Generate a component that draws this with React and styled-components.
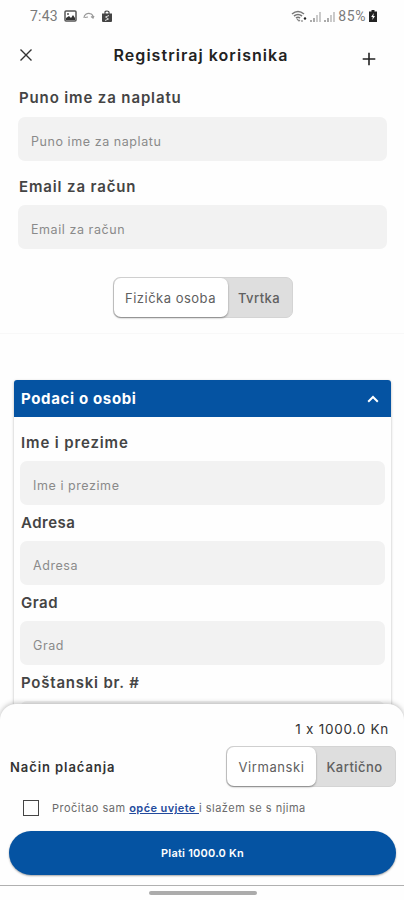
import React, { useState } from "react";
import styled, { createGlobalStyle } from "styled-components";

const GlobalStyle = createGlobalStyle`
  * {
    box-sizing: border-box;
  }
  body {
    margin: 0;
    background-color: #fefefe;
    font-family: Inter, "Noto Sans", sans-serif;
  }
`;

const Screen = styled.div`
  position: relative;
  width: 404px;
  height: 900px;
  overflow: hidden;
  background-color: #fefefe;
`;

const StatusBar = styled.div`
  height: 32px;
  padding: 0 27px 0 30px;
  display: flex;
  align-items: center;
  justify-content: space-between;
  font-family: Roboto, sans-serif;
  font-size: 14px;
  color: #7a7a7a;
`;

const StatusGroup = styled.div`
  display: flex;
  align-items: center;
  gap: ${(props) => props.$gap}px;
`;

const StatusText = styled.span`
  letter-spacing: ${(props) => props.$spacing || 0}px;
`;

const Header = styled.header`
  height: 46px;
  padding: 0 28px 0 19px;
  display: flex;
  align-items: center;
  justify-content: space-between;
`;

const Title = styled.h1`
  margin: 0 0 0 7px;
  font-size: 16px;
  font-weight: 600;
  letter-spacing: 1.05px;
  color: #222;
`;

const IconButton = styled.button`
  display: flex;
  padding: 0;
  border: none;
  background: transparent;
  margin-top: ${(props) => props.$top || 0}px;
`;

const BillingForm = styled.section`
  height: 256px;
  padding: 0 17px 0 18px;
  border-bottom: 1px solid #f8f8f8;
`;

const Label = styled.label`
  display: flex;
  align-items: center;
  height: ${(props) => props.$height || 36}px;
  padding-top: ${(props) => props.$top || 0}px;
  padding-left: 1px;
  font-size: 15px;
  font-weight: 600;
  letter-spacing: ${(props) => props.$spacing || 0.87}px;
  color: #444;
`;

const Input = styled.input`
  display: block;
  width: 100%;
  height: 44px;
  padding: 4px 13px 0;
  border: none;
  border-radius: 7px;
  outline: none;
  background-color: #f2f2f2;
  font-family: inherit;
  font-size: 12.5px;
  letter-spacing: 0.57px;
  &::placeholder {
    color: #8a8a8a;
    opacity: 1;
  }
`;

const ToggleRow = styled.div`
  display: flex;
  justify-content: center;
  padding-top: 28px;
`;

const ToggleGroup = styled.div`
  display: flex;
  width: ${(props) => props.$width}px;
  height: 41px;
  border: 1px solid #d4d4d4;
  border-radius: 7px;
  background-color: #dedede;
`;

const ToggleOption = styled.button`
  width: ${(props) => props.$width}px;
  padding: 0;
  border: none;
  border-radius: 7px;
  background-color: ${(props) => (props.$active ? "#fff" : "transparent")};
  box-shadow: ${(props) => (props.$active ? "0 1px 2px rgba(0, 0, 0, 0.4)" : "none")};
  font-family: inherit;
  font-size: 13px;
  font-weight: ${(props) => (props.$active ? 400 : 500)};
  letter-spacing: ${(props) => props.$spacing}px;
  color: #606060;
`;

const Accordion = styled.section`
  margin: 46px 13px 0 14px;
  height: 400px;
  border-radius: 3px;
  box-shadow: 0 1px 3px rgba(0, 0, 0, 0.28);
`;

const AccordionHeader = styled.div`
  display: flex;
  align-items: center;
  justify-content: space-between;
  height: 37px;
  padding: 0 12px 0 7px;
  border-radius: 3px 3px 0 0;
  background-color: #0553a2;
  color: #fff;
  font-size: 15px;
  font-weight: 700;
  letter-spacing: 0.65px;
`;

const AccordionBody = styled.div`
  padding: 7px 6px 0;
`;

const AccordionInput = styled(Input)`
  margin-top: 1px;
  margin-bottom: -1px;
`;

const CheckoutSheet = styled.section`
  position: absolute;
  left: 0;
  right: 0;
  bottom: 0;
  height: 196px;
  padding: 14px 8px 0 9px;
  border-radius: 16px 16px 0 0;
  background-color: #fefefe;
  box-shadow: 0 -1px 5px rgba(0, 0, 0, 0.25);
`;

const Amount = styled.div`
  height: 28px;
  padding-right: 7px;
  line-height: 23px;
  text-align: right;
  font-size: 13.5px;
  letter-spacing: 0.75px;
  color: #333;
`;

const PaymentRow = styled.div`
  display: flex;
  align-items: center;
  justify-content: space-between;
`;

const PaymentTitle = styled.span`
  padding-left: 1px;
  font-size: 13px;
  font-weight: 600;
  letter-spacing: 0.92px;
  color: #333;
`;

const TermsRow = styled.div`
  display: flex;
  align-items: center;
  height: 44px;
  padding: 0 0 2px 14px;
`;

const Checkbox = styled.span`
  width: 16px;
  height: 16px;
  margin-right: 13px;
  border: 1.5px solid #444;
`;

const TermsText = styled.span`
  font-size: 11px;
  letter-spacing: 0.5px;
  color: #6b6b6b;
  white-space: pre;
`;

const TermsLink = styled.span`
  font-weight: 600;
  letter-spacing: 0.4px;
  color: #234a9c;
  text-decoration: underline;
`;

const PayButton = styled.button`
  width: 100%;
  height: 44px;
  border: none;
  border-radius: 22px;
  background-color: #0553a2;
  box-shadow: 0 1px 2px rgba(0, 0, 0, 0.35);
  color: #fff;
  font-family: inherit;
  font-size: 11px;
  font-weight: 600;
  letter-spacing: 0.22px;
`;

const NavBar = styled.div`
  display: flex;
  justify-content: center;
  margin: 10px -8px 0 -9px;
  padding-top: 5px;
  border-top: 1px solid #b0b0b0;
`;

const NavHandle = styled.div`
  width: 108px;
  height: 4px;
  margin-left: 1px;
  border-radius: 2px;
  background-color: #ababab;
`;

const PictureIcon = () => (
  <svg width="13" height="12" viewBox="0 0 13 12">
    <rect x="1" y="1" width="11" height="10" rx="1" fill="none" stroke="#555" strokeWidth="1.5" />
    <path d="M2 10V8l3-2 2 2 2-3 2 3v2z" fill="#333" />
    <circle cx="4" cy="4" r="1" fill="#555" />
  </svg>
);

const SyncIcon = () => (
  <svg width="12" height="8" viewBox="0 0 12 8">
    <path d="M1 6C1 2.5 4 1 7 1.6C9.5 2 10 4 10 5.5M2 5.5L5 5M8 4.5l2 1.5 1-2" fill="none" stroke="#999" strokeWidth="1.2" />
  </svg>
);

const BagIcon = () => (
  <svg width="12" height="13" viewBox="0 0 12 13">
    <path d="M4 4V2q0-1 2-1t2 1v2" fill="none" stroke="#444" strokeWidth="1.2" />
    <path d="M1 3.5h10V11q0 1-1 1H2q-1 0-1-1z" fill="#444" />
    <path d="M8 5.5L4.5 7l3 2L4 10.5" fill="none" stroke="#ddd" strokeWidth="1" />
  </svg>
);

const WifiIcon = () => (
  <svg width="16" height="13" viewBox="0 0 16 13">
    <path d="M1 4Q7-1 13 4M3 6q4-3 8 0M5 8q2-1.5 4 0" fill="none" stroke="#777" strokeWidth="1.6" />
    <path d="M6 9l2 2 1-1M11 10v2" fill="none" stroke="#888" strokeWidth="1.2" />
    <circle cx="14" cy="8.5" r="1.2" fill="#222" />
  </svg>
);

const SignalIcon = () => (
  <svg width="11" height="11" viewBox="0 0 11 11">
    <path d="M1 9v2M4 7v4" stroke="#888" strokeWidth="1.4" />
    <path d="M7 4v7M10 1v10" stroke="#b5b5b5" strokeWidth="1.4" />
  </svg>
);

const BatteryIcon = () => (
  <svg width="8" height="12" viewBox="0 0 8 12">
    <path d="M2.5 0h3v1.5H8V12H0V1.5h2.5z" fill="#222" />
    <path d="M4.8 3L2.2 7h1.6l-.5 3L6 6H4.3z" fill="#fff" />
  </svg>
);

const CloseIcon = () => (
  <svg width="14" height="14" viewBox="0 0 14 14">
    <path d="M1.5 1.5l11 11M12.5 1.5l-11 11" stroke="#333" strokeWidth="1.4" />
  </svg>
);

const PlusIcon = () => (
  <svg width="14" height="14" viewBox="0 0 14 14">
    <path d="M7 .7v12.6M.7 7h12.6" stroke="#222" strokeWidth="1.6" />
  </svg>
);

const ChevronUp = () => (
  <svg width="12" height="8" viewBox="0 0 12 8">
    <path d="M1.2 6.8L6 2l4.8 4.8" fill="none" stroke="#fff" strokeWidth="2" />
  </svg>
);

const personFields = [
  { name: "Ime i prezime", spacing: 0.87 },
  { name: "Adresa", spacing: 0.5 },
  { name: "Grad", spacing: 0.5 },
];

const App = () => {
  const [person, setPerson] = useState("osoba");
  const [payment, setPayment] = useState("virmanski");

  return (
    <Screen>
      <GlobalStyle />
      <StatusBar>
        <StatusGroup $gap={6}>
          <StatusText $spacing={0.2}>7:43</StatusText>
          <PictureIcon />
          <SyncIcon />
          <BagIcon />
        </StatusGroup>
        <StatusGroup $gap={3}>
          <WifiIcon />
          <SignalIcon />
          <SignalIcon />
          <StatusText $spacing={0.6}>85%</StatusText>
          <BatteryIcon />
        </StatusGroup>
      </StatusBar>
      <Header>
        <IconButton aria-label="Zatvori">
          <CloseIcon />
        </IconButton>
        <Title>Registriraj korisnika</Title>
        <IconButton aria-label="Dodaj" $top={8}>
          <PlusIcon />
        </IconButton>
      </Header>
      <BillingForm>
        <Label $height={39}>Puno ime za naplatu</Label>
        <Input placeholder="Puno ime za naplatu" />
        <Label $height={44} $top={6}>
          Email za račun
        </Label>
        <Input placeholder="Email za račun" />
        <ToggleRow>
          <ToggleGroup $width={180}>
            <ToggleOption $width={114} $spacing={0.5} $active={person === "osoba"} onClick={() => setPerson("osoba")}>
              Fizička osoba
            </ToggleOption>
            <ToggleOption $width={63} $spacing={0.4} $active={person === "tvrtka"} onClick={() => setPerson("tvrtka")}>
              Tvrtka
            </ToggleOption>
          </ToggleGroup>
        </ToggleRow>
      </BillingForm>
      <Accordion>
        <AccordionHeader>
          Podaci o osobi
          <ChevronUp />
        </AccordionHeader>
        <AccordionBody>
          {personFields.map((field) => (
            <React.Fragment key={field.name}>
              <Label $spacing={field.spacing}>{field.name}</Label>
              <AccordionInput placeholder={field.name} />
            </React.Fragment>
          ))}
          <Label $spacing={0.78}>Poštanski br. #</Label>
          <AccordionInput />
        </AccordionBody>
      </Accordion>
      <CheckoutSheet>
        <Amount>1 x 1000.0 Kn</Amount>
        <PaymentRow>
          <PaymentTitle>Način plaćanja</PaymentTitle>
          <ToggleGroup $width={170}>
            <ToggleOption $width={89} $spacing={0.6} $active={payment === "virmanski"} onClick={() => setPayment("virmanski")}>
              Virmanski
            </ToggleOption>
            <ToggleOption $width={77} $spacing={0.45} $active={payment === "karticno"} onClick={() => setPayment("karticno")}>
              Kartično
            </ToggleOption>
          </ToggleGroup>
        </PaymentRow>
        <TermsRow>
          <Checkbox />
          <TermsText>
            Pročitao sam <TermsLink>opće uvjete </TermsLink>i slažem se s njima
          </TermsText>
        </TermsRow>
        <PayButton>Plati 1000.0 Kn</PayButton>
        <NavBar>
          <NavHandle />
        </NavBar>
      </CheckoutSheet>
    </Screen>
  );
};

export default App;
